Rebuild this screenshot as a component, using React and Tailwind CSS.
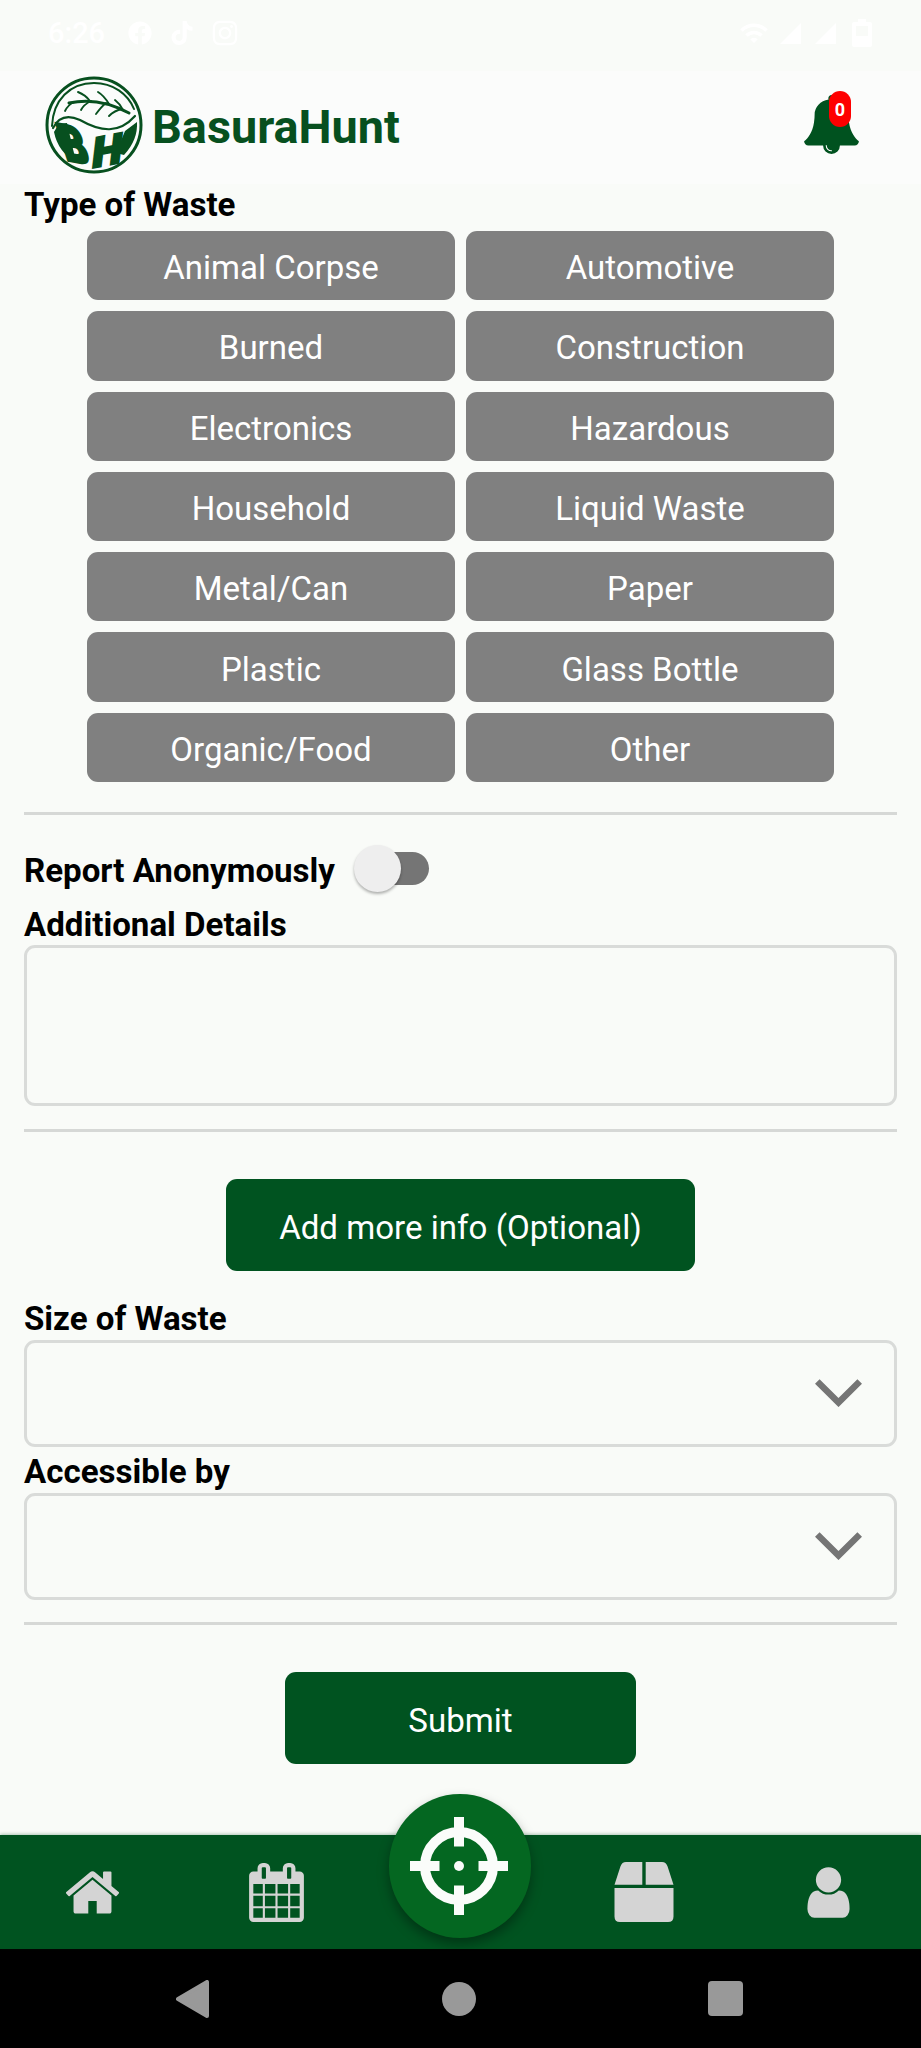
import React from "react";
import { FaFacebook, FaTiktok, FaInstagram } from "react-icons/fa";
import { MdWifi, MdSignalCellular4Bar } from "react-icons/md";

const wasteTypes = [
  "Animal Corpse", "Automotive",
  "Burned", "Construction",
  "Electronics", "Hazardous",
  "Household", "Liquid Waste",
  "Metal/Can", "Paper",
  "Plastic", "Glass Bottle",
  "Organic/Food", "Other",
];

const paths = {
  bell: "M912 1696q0-16-16-16-59 0-101.5-42.5t-42.5-101.5q0-16-16-16t-16 16q0 73 51.5 124.5t124.5 51.5q16 0 16-16zm816-288q0 52-38 90t-90 38h-448q0 106-75 181t-181 75-181-75-75-181h-448q-52 0-90-38t-38-90q50-42 91-88t85-119.5 74.5-158.5 50-206 19.5-260q0-152 117-282.5t307-158.5q-8-19-8-39 0-40 28-68t68-28 68 28 28 68q0 20-8 39 190 28 307 158.5t117 282.5q0 139 19.5 260t50 206 74.5 158.5 85 119.5 91 88z",
  home: "M1472 992v480q0 26-19 45t-45 19h-384v-384h-256v384h-384q-26 0-45-19t-19-45v-480q0-1 .5-3t.5-3l575-474 575 474q1 2 1 6zm223-69l-62 74q-8 9-21 11h-3q-13 0-21-7l-692-577-692 577q-12 8-24 7-13-2-21-11l-62-74q-8-10-7-23.5t11-21.5l719-599q32-26 76-26t76 26l244 204v-195q0-14 9-23t23-9h192q14 0 23 9t9 23v408l219 182q10 8 11 21.5t-7 23.5z",
  calendar: "M192 1664h288v-288h-288v288zm352 0h320v-288h-320v288zm-352-352h288v-320h-288v320zm352 0h320v-320h-320v320zm-352-384h288v-288h-288v288zm736 736h320v-288h-320v288zm-384-736h320v-288h-320v288zm768 736h288v-288h-288v288zm-384-352h320v-320h-320v320zm-352-864v-288q0-13-9.5-22.5t-22.5-9.5h-64q-13 0-22.5 9.5t-9.5 22.5v288q0 13 9.5 22.5t22.5 9.5h64q13 0 22.5-9.5t9.5-22.5zm736 864h288v-320h-288v320zm-384-384h320v-288h-320v288zm384 0h288v-288h-288v288zm32-480v-288q0-13-9.5-22.5t-22.5-9.5h-64q-13 0-22.5 9.5t-9.5 22.5v288q0 13 9.5 22.5t22.5 9.5h64q13 0 22.5-9.5t9.5-22.5zm384-64v1280q0 52-38 90t-90 38h-1408q-52 0-90-38t-38-90v-1280q0-52 38-90t90-38h128v-96q0-66 47-113t113-47h64q66 0 113 47t47 113v96h384v-96q0-66 47-113t113-47h64q66 0 113 47t47 113v96h128q52 0 90 38t38 90z",
  user: "M1536 1399q0 109-62.5 187t-150.5 78h-854q-88 0-150.5-78t-62.5-187q0-85 8.5-160.5t31.5-152 58.5-131 94-89 134.5-34.5q131 128 313 128t313-128q76 0 134.5 34.5t94 89 58.5 131 31.5 152 8.5 160.5zm-256-887q0 159-112.5 271.5t-271.5 112.5-271.5-112.5-112.5-271.5 112.5-271.5 271.5-112.5 271.5 112.5 112.5 271.5z",
};

function Glyph({ name, className }) {
  return (
    <svg viewBox="0 0 1792 1792" className={className} fill="currentColor">
      <path d={paths[name]} />
    </svg>
  );
}

function Logo() {
  return (
    <svg viewBox="0 0 98 98" className="h-[98px] w-[98px] shrink-0 overflow-visible" fill="none" stroke="#07501f" strokeLinecap="round">
      <circle cx="49" cy="49" r="47" strokeWidth="3" />
      <path d="M7 50C8 24 25 7 49 7C68 7 83 18 89 33" strokeWidth="2" />
      <path d="M8 52C14 40 24 39 35 44C56 56 74 58 90 40" strokeWidth="2.2" />
      <path d="M24 27C42 23 62 25 84 37" strokeWidth="3" />
      <path d="M20 35C22 31 25 28 29 26M33 16C38 18 42 21 45 25M46 25C42 27 38 30 36 34M53 16C58 19 61 23 64 28M61 27C57 30 54 34 51 38M70 24C74 27 76 30 78 34M77 33C72 34 67 37 64 40" strokeWidth="1.9" />
      {/* bowl edges beside the initials */}
      <path d="M9 56Q13 47 22 47L31 86Q13 76 9 56ZM92 46Q93 64 79 79L71 77L80 55Z" fill="#07501f" stroke="none" />
      <g fill="#07501f" stroke="#07501f" strokeWidth="3" fontFamily="Roboto, sans-serif" fontWeight="900" fontSize="50">
        <text transform="matrix(0.8 0.14 0.34 1.04 21 84)">B</text>
        <text transform="matrix(0.84 -0.16 -0.1 0.84 46 92)">H</text>
      </g>
    </svg>
  );
}

function Label({ children, className }) {
  return <h2 className={`h-[38px] text-[33.1px] leading-[38px] font-bold text-black ${className}`}>{children}</h2>;
}

function Divider({ className }) {
  return <div className={`h-[3px] shrink-0 bg-[#d6d8d6] ${className}`} />;
}

function SelectBox({ className }) {
  return (
    <div className={`flex h-[107px] shrink-0 items-center justify-end rounded-[11px] border-[3px] border-[#d9dbd9] pr-[32px] pb-[1px] ${className}`}>
      <svg viewBox="0 0 47 28" className="h-[28px] w-[47px]" fill="none" stroke="#757575" strokeWidth="6.5">
        <path d="M2.3 2.5L23.5 23.5L44.7 2.5" />
      </svg>
    </div>
  );
}

export default function App() {
  return (
    <div className="flex h-[2048px] w-[921px] flex-col overflow-hidden bg-[#f9fbf8] font-[Roboto,sans-serif]">
      <div className="flex h-[71px] shrink-0 items-center justify-between pr-[46px] pl-[48px] text-white">
        <div className="flex items-center pb-[5px]">
          <span className="w-[80px] text-[29px] leading-none font-medium">6:26</span>
          <FaFacebook className="mr-[19px] h-[24px] w-[24px]" />
          <FaTiktok className="mr-[19px] h-[24px] w-[22px]" />
          <FaInstagram className="h-[28px] w-[26px]" />
        </div>
        <div className="flex items-center pb-[5px]">
          <MdWifi className="mr-[9px] h-[30px] w-[30px]" />
          <MdSignalCellular4Bar className="mr-[10px] h-[25px] w-[25px]" />
          <MdSignalCellular4Bar className="mr-[14px] h-[25px] w-[25px]" />
          <svg viewBox="0 0 20 28" className="mr-[3px] h-[28px] w-[20px]" fill="currentColor" fillRule="evenodd">
            <path d="M6 0H14V3H18Q20 3 20 5V26Q20 28 18 28H2Q0 28 0 26V5Q0 3 2 3H6ZM4 7V17H16V7Z" />
          </svg>
        </div>
      </div>

      <header className="flex h-[113px] shrink-0 items-center justify-between bg-[#fbfcfb] pr-[60px] pb-[6px] pl-[45px]">
        <div className="flex items-center">
          <Logo />
          <span className="pt-[5px] pl-[9px] text-[46.8px] leading-none font-bold text-[#07501f]">BasuraHunt</span>
        </div>
        <div className="relative h-[59px] w-[59px] text-[#00521f]">
          <Glyph name="bell" className="h-[59px] w-[59px]" />
          <span className="absolute -top-[4px] left-[27px] flex h-[36px] w-[22px] items-center justify-center rounded-full bg-[#fe0000] text-[18px] font-bold text-white">0</span>
        </div>
      </header>

      <main className="flex flex-1 flex-col px-[24px]">
        <Label className="mt-[2px]">Type of Waste</Label>
        <div className="mx-[63px] mt-[7px] grid h-[551px] shrink-0 grid-cols-2 grid-rows-7 gap-x-[11px] gap-y-[11px]">
          {wasteTypes.map((type) => (
            <button key={type} className="flex items-center justify-center rounded-[11px] bg-[#808080] pt-[4px] text-[33px] leading-none text-white">
              {type}
            </button>
          ))}
        </div>
        <Divider className="mt-[30px]" />

        <div className="mt-[37px] flex h-[38px] shrink-0 items-center">
          <Label>Report Anonymously</Label>
          <div className="relative -mt-[5px] ml-[32px] h-[33px] w-[62px] rounded-full bg-[#757575]">
            <span className="absolute -top-[7px] -left-[13px] h-[47px] w-[47px] rounded-full bg-[#eeeeee] shadow-[0_2px_3px_rgba(0,0,0,0.3)]" />
          </div>
        </div>
        <Label className="mt-[16px]">Additional Details</Label>
        <div className="mt-[1px] h-[161px] shrink-0 rounded-[11px] border-[3px] border-[#d9dbd9]" />
        <Divider className="mt-[23px]" />

        <button className="mt-[47px] flex h-[92px] w-[469px] shrink-0 items-center justify-center self-center rounded-[11px] bg-[#005320] pt-[5px] text-[33.1px] leading-none text-white">
          Add more info (Optional)
        </button>

        <Label className="mt-[29px]">Size of Waste</Label>
        <SelectBox className="mt-[2px]" />
        <Label className="mt-[6px]">Accessible by</Label>
        <SelectBox className="mt-[2px]" />
        <Divider className="mt-[22px]" />

        <button className="mt-[47px] flex h-[92px] w-[351px] shrink-0 items-center justify-center self-center rounded-[11px] bg-[#005320] pt-[5px] text-[33.1px] leading-none text-white">
          Submit
        </button>
      </main>

      <nav className="relative flex h-[114px] shrink-0 items-center bg-[#005320] pr-[1px] text-[#d4d4d4] shadow-[0_-1px_3px_rgba(0,83,32,0.3)]">
        <div className="flex flex-1 justify-center"><Glyph name="home" className="h-[59px] w-[59px]" /></div>
        <div className="flex flex-1 justify-center"><Glyph name="calendar" className="h-[59px] w-[59px]" /></div>
        <div className="flex flex-1 justify-center">
          <button className="absolute -top-[41px] flex h-[144px] w-[142px] items-center justify-center rounded-full bg-[#046721] pr-[2px] shadow-[0_6px_12px_rgba(0,0,0,0.35)]">
            <svg viewBox="0 0 98 98" className="h-[98px] w-[98px]" fill="none" stroke="#fafcfa" strokeWidth="10">
              <circle cx="49" cy="49" r="34" />
              <path d="M49 0V29.5M49 68.5V98M0 49H29.5M68.5 49H98" />
              <circle cx="49" cy="49" r="5" fill="#fafcfa" stroke="none" />
            </svg>
          </button>
        </div>
        <div className="flex flex-1 justify-center">
          <svg viewBox="0 0 60 60" className="h-[60px] w-[60px]" fill="currentColor">
            <path d="M12 0H28.3V22.7H.5L6.5 4.3Q8 0 12 0ZM31.7 0H48Q52 0 53.5 4.3L59.5 22.7H31.7ZM.5 26H59.5V54.5Q59.5 60 54 60H6Q.5 60 .5 54.5Z" />
          </svg>
        </div>
        <div className="flex flex-1 justify-center"><Glyph name="user" className="h-[59px] w-[59px]" /></div>
      </nav>

      <footer className="flex h-[99px] shrink-0 items-center justify-between bg-black pr-[178px] pl-[176px]">
        <svg viewBox="0 0 34 38" className="h-[38px] w-[34px]" fill="#999" stroke="#999" strokeWidth="4" strokeLinejoin="round">
          <path d="M2 19L31 2V36Z" />
        </svg>
        <span className="h-[34px] w-[34px] rounded-full bg-[#999]" />
        <span className="h-[35px] w-[35px] rounded-[4px] bg-[#999]" />
      </footer>
    </div>
  );
}
